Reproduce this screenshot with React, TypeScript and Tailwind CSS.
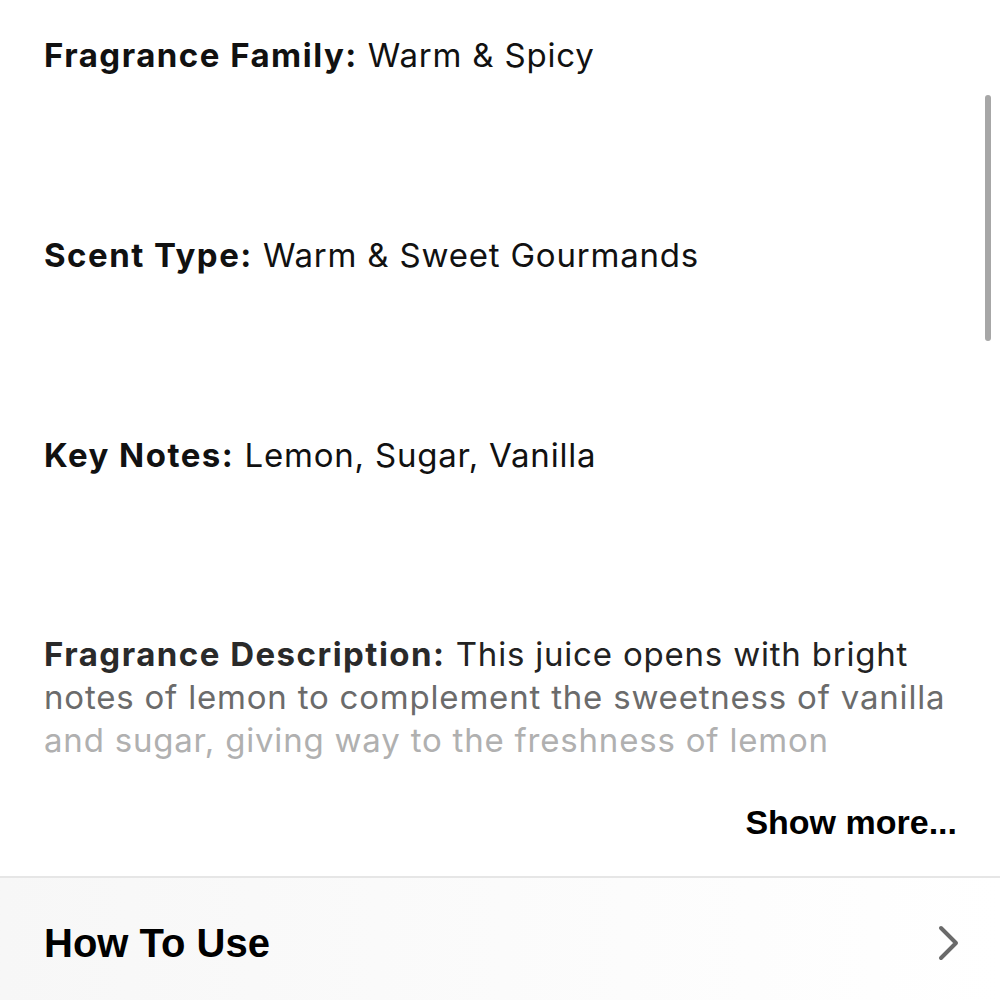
import React from "react";

const ROWS = [
  { label: "Fragrance Family:", value: "Warm & Spicy" },
  { label: "Scent Type:", value: "Warm & Sweet Gourmands" },
  { label: "Key Notes:", value: "Lemon, Sugar, Vanilla" },
];

export default function App() {
  return (
    <div className="relative w-[1000px] h-[1000px] overflow-hidden bg-white font-['Inter',sans-serif] text-[#111] tracking-[0.05em]">
      {/* scroll indicator */}
      <div className="absolute right-[9px] top-[95px] w-[6px] h-[246px] rounded-full bg-[#a7a7a7]" />

      <div className="flex flex-col pl-[44px] pr-[40px]">
        {ROWS.map((row) => (
          <p key={row.label} className="h-[200px] pt-[33px] text-[33px] leading-[44px]">
            <span className="font-bold tracking-[0.045em]">{row.label}</span> {row.value}
          </p>
        ))}

        <p className="pt-[33px] text-[33px] leading-[43px] whitespace-nowrap">
          <span className="font-bold tracking-[0.045em] text-[#2a2a2a]">Fragrance Description:</span>{" "}
          <span className="text-[#222]">This juice opens with bright</span>
          <br />
          <span className="text-[#6b6b6b]">notes of lemon to complement the sweetness of vanilla</span>
          <br />
          <span className="text-[#b0b0b0]">and sugar, giving way to the freshness of lemon</span>
        </p>

        <div className="flex justify-end pt-[40px]">
          <span className="font-['Liberation_Sans',sans-serif] font-bold tracking-normal text-[34px] leading-[40px] text-black mr-[3px]">
            Show more...
          </span>
        </div>
      </div>

      <div className="mt-[34px] h-[2px] bg-[#e6e6e6]" />

      <div className="flex items-center justify-between pl-[44px] pr-[40px] h-[130px] bg-gradient-to-r from-[#f7f7f7] to-white">
        <span className="font-['Liberation_Sans',sans-serif] font-bold tracking-normal text-[40px] text-black">How To Use</span>
        <svg width="22" height="36" viewBox="0 0 22 36" fill="none">
          <path d="M3 3 L18 18 L3 33" stroke="#6a6a6a" strokeWidth="4" strokeLinecap="round" strokeLinejoin="round" />
        </svg>
      </div>
    </div>
  );
}
